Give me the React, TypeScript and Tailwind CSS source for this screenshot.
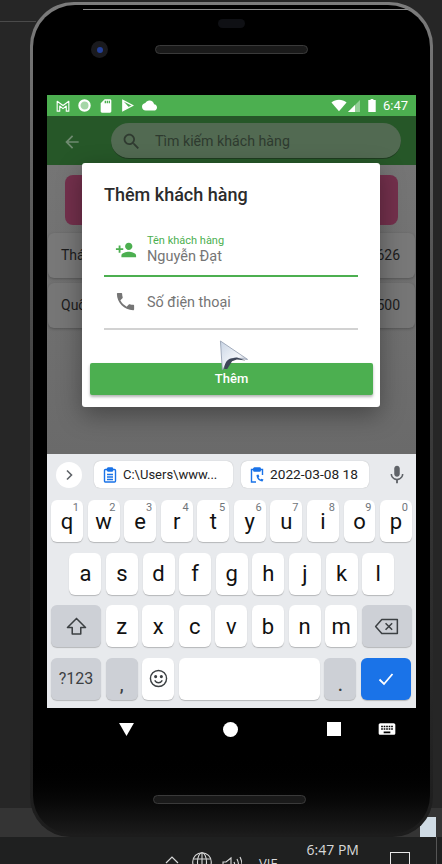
import { ReactNode } from 'react';

const ROBOTO = "font-['Roboto',sans-serif]";

function MdIcon({ d, className }: { d: string; className: string }) {
    return (
        <svg viewBox="0 0 24 24" fill="currentColor" className={className}>
            <path d={d} />
        </svg>
    );
}

const ICONS = {
    back: 'M20 11H7.83l5.59-5.59L12 4l-8 8 8 8 1.41-1.41L7.83 13H20v-2z',
    search: 'M15.5 14h-.79l-.28-.27C15.41 12.59 16 11.11 16 9.5 16 5.91 13.09 3 9.5 3S3 5.91 3 9.5 5.91 16 9.5 16c1.61 0 3.09-.59 4.23-1.57l.27.28v.79l5 4.99L20.49 19l-4.99-5zm-6 0C7.01 14 5 11.99 5 9.5S7.01 5 9.5 5 14 7.01 14 9.5 11.99 14 9.5 14z',
    personAdd: 'M15 12c2.21 0 4-1.79 4-4s-1.79-4-4-4-4 1.79-4 4 1.79 4 4 4zm-9-2V7H4v3H1v2h3v3h2v-3h3v-2H6zm9 4c-2.67 0-8 1.34-8 4v2h16v-2c0-2.66-5.33-4-8-4z',
    phone: 'M6.62 10.79c1.44 2.83 3.76 5.14 6.59 6.59l2.2-2.2c.27-.27.67-.36 1.02-.24 1.12.37 2.33.57 3.57.57.55 0 1 .45 1 1V20c0 .55-.45 1-1 1-9.39 0-17-7.61-17-17 0-.55.45-1 1-1h3.5c.55 0 1 .45 1 1 0 1.25.2 2.45.57 3.57.11.35.03.74-.25 1.02l-2.2 2.2z',
    cloud: 'M19.35 10.04C18.67 6.59 15.64 4 12 4 9.11 4 6.6 5.64 5.35 8.04 2.34 8.36 0 10.91 0 14c0 3.31 2.69 6 6 6h13c2.76 0 5-2.24 5-5 0-2.64-2.05-4.78-4.65-4.96z',
    sd: 'M18 2h-8L4.02 8 4 20c0 1.1.9 2 2 2h12c1.1 0 2-.9 2-2V4c0-1.1-.9-2-2-2zm-6 6h-2V4h2v4zm3 0h-2V4h2v4zm3 0h-2V4h2v4z',
    mic: 'M12 14c1.66 0 3-1.34 3-3V5c0-1.66-1.34-3-3-3S9 3.34 9 5v6c0 1.66 1.34 3 3 3zm5.3-3c0 3-2.54 5.1-5.3 5.1S6.7 14 6.7 11H5c0 3.41 2.72 6.23 6 6.72V21h2v-3.28c3.28-.48 6-3.3 6-6.72h-1.7z',
    keyboard: 'M20 5H4c-1.1 0-1.99.9-1.99 2L2 17c0 1.1.9 2 2 2h16c1.1 0 2-.9 2-2V7c0-1.1-.9-2-2-2zm-9 3h2v2h-2V8zm0 3h2v2h-2v-2zM8 8h2v2H8V8zm0 3h2v2H8v-2zm-1 2H5v-2h2v2zm0-3H5V8h2v2zm9 7H8v-2h8v2zm0-4h-2v-2h2v2zm0-3h-2V8h2v2zm3 3h-2v-2h2v2zm0-3h-2V8h2v2z',
};

function StatusBar() {
    return (
        <div className={`h-[21px] shrink-0 bg-[#4caf50] flex items-center justify-between pl-[9px] pr-[8px] text-white ${ROBOTO}`}>
            <div className="flex items-center">
                <svg viewBox="0 0 16 14" className="w-[14px] h-[12px]" fill="none">
                    <path d="M1.2 13V1.500L8 6.500l6.800-5V13h-3V7L8 10 4.200 7v6z" stroke="currentColor" strokeWidth="1.300" strokeLinejoin="round" />
                </svg>
                <svg viewBox="0 0 14 14" className="ml-[8px] w-[13px] h-[13px]">
                    <circle cx="7" cy="7" r="5.500" fill="#a5d6a7" stroke="white" strokeWidth="2.400" />
                </svg>
                <MdIcon d={ICONS.sd} className="ml-[7px] w-[16px] h-[16px]" />
                <svg viewBox="0 0 14 14" className="ml-[7px] w-[13px] h-[13px]" fill="none" stroke="currentColor" strokeWidth="1.500">
                    <path d="M2 1.500v11L12.500 7z" />
                    <path d="M2 1.500 8.500 9 2 12.500" fill="white" stroke="none" />
                </svg>
                <MdIcon d={ICONS.cloud} className="ml-[8px] w-[15px] h-[15px]" />
            </div>
            <div className="flex items-center">
                <svg viewBox="0 0 18 14" className="w-[16px] h-[13px]" fill="currentColor">
                    <path d="M9 13.500 0.500 3.500C3 1.500 5.800.5 9 .5s6 1 8.500 3z" />
                </svg>
                <svg viewBox="0 0 12 12" className="w-[12px] h-[12px] ml-[1px]">
                    <path d="M0 12 12 0v12z" fill="rgba(255,255,255,.4)" />
                    <path d="M0 12 7 5v7z" fill="white" />
                </svg>
                <svg viewBox="0 0 8 14" className="w-[8px] h-[13px] ml-[8px]" fill="currentColor">
                    <path d="M2.500 0h3v1.200H8V14H0V1.200h2.500z" />
                </svg>
                <span className="text-[13px] ml-[7px] leading-none">6:47</span>
            </div>
        </div>
    );
}

function AppBar() {
    return (
        <div className="h-[49px] bg-[#265728] flex items-start pt-[7px] pl-[15px] pr-[15px] shrink-0">
            <MdIcon d={ICONS.back} className="mt-[9px] w-[20px] h-[20px] text-[#6f8a70] shrink-0" />
            <div className="ml-[29px] flex-1 h-[36px] rounded-full bg-[#526a52] border-b border-[#1f3d20] flex items-center pl-[10px] pt-[2px]">
                <MdIcon d={ICONS.search} className="w-[21px] h-[21px] text-[#2f3a30] shrink-0" />
                <span className={`ml-[13px] text-[14.2px] text-[#2e3a2f] ${ROBOTO}`}>Tìm kiếm khách hàng</span>
            </div>
        </div>
    );
}

function BehindDialog() {
    return (
        <div className="flex-1 bg-gradient-to-b from-[#757575] to-[#6a6a6a]">
            <div className="mx-[18px] mt-[10px] h-[50px] rounded-[8px] bg-[#73304c]" />
            <div className={`mt-[8px] flex flex-col gap-[5px] text-[14px] text-[#1c1c1c] ${ROBOTO}`}>
                <div className="mx-px h-[45px] rounded-[6px] bg-[#787878] flex items-center justify-between pl-[13px] pr-[15px] shadow-[0_1px_3px_rgba(0,0,0,.25)]">
                    <span>Thái</span>
                    <span>626</span>
                </div>
                <div className="mx-px h-[45px] rounded-[6px] bg-[#767676] flex items-center justify-between pl-[13px] pr-[15px] shadow-[0_1px_3px_rgba(0,0,0,.25)]">
                    <span>Quốc</span>
                    <span>500</span>
                </div>
            </div>
        </div>
    );
}

function AddCustomerDialog() {
    return (
        <div className={`absolute left-[35px] top-[68px] w-[298px] h-[244px] bg-white rounded-[3px] shadow-[0_8px_24px_rgba(0,0,0,.35)] pl-[8px] pr-[7px] ${ROBOTO}`}>
            <div className="pl-[14px] pt-[21px] text-[18px] leading-[22px] font-medium text-[#2b2b2b]">Thêm khách hàng</div>
            <div className="ml-[14px] mr-[15px] mt-[21px] flex flex-col">
                <div className="h-[50px] flex items-end pb-[8px] border-b-2 border-[#4caf50]">
                    <div className="w-[43px] flex justify-center shrink-0">
                        <MdIcon d={ICONS.personAdd} className="w-[22px] h-[22px] text-[#4caf50] mb-[6px]" />
                    </div>
                    <div className="flex flex-col">
                        <span className="text-[11px] leading-[12px] text-[#4caf50]">Tên khách hàng</span>
                        <span className="text-[14.5px] leading-[20px] text-[#757575]">Nguyễn Đạt</span>
                    </div>
                </div>
                <div className="h-[53px] flex items-end pb-[15px] border-b-2 border-[#d2d2d2]">
                    <div className="w-[43px] flex justify-center shrink-0">
                        <MdIcon d={ICONS.phone} className="w-[23px] h-[23px] text-[#757575]" />
                    </div>
                    <span className="text-[14.4px] leading-[20px] text-[#757575]">Số điện thoại</span>
                </div>
            </div>
            <button className="mt-[33px] w-full h-[32px] bg-[#4caf50] rounded-[2px] text-white text-[13px] font-medium shadow-[0_2px_3px_rgba(0,0,0,.3)]">
                Thêm
            </button>
        </div>
    );
}

function Key({ label, hint, className = 'bg-white w-[32px]' }: { label: ReactNode; hint?: string; className?: string }) {
    return (
        <div className={`relative h-[42px] rounded-[6px] shadow-[0_1px_1px_rgba(0,0,0,.22)] flex items-center justify-center ${className}`}>
            {label}
            {hint && <span className="absolute top-[1px] right-[4px] text-[11px] leading-[13px] text-[#70757a]">{hint}</span>}
        </div>
    );
}

function Keyboard() {
    const row1 = [['q', '1'], ['w', '2'], ['e', '3'], ['r', '4'], ['t', '5'], ['y', '6'], ['u', '7'], ['i', '8'], ['o', '9'], ['p', '0']];
    const letter = (k: string) => <span className="text-[22px] text-[#111]">{k}</span>;
    return (
        <div className={`h-[254px] shrink-0 bg-[#e8eaed] px-[4px] ${ROBOTO}`}>
            <div className="h-[46px] flex items-center pb-[5px]">
                <div className="ml-[5px] w-[26px] h-[26px] rounded-full bg-white flex items-center justify-center text-[#5f6368] shrink-0">
                    <svg viewBox="0 0 12 12" className="w-[12px] h-[12px]" fill="none" stroke="currentColor" strokeWidth="1.600">
                        <path d="M4 1.500 8.500 6 4 10.500" />
                    </svg>
                </div>
                <div className="ml-[12px] w-[139px] h-[27px] bg-white rounded-[6px] shadow-[0_0_1px_rgba(0,0,0,.3)] flex items-center pl-[9px] text-[13px] text-[#222] shrink-0">
                    <svg viewBox="0 0 14 16" className="w-[14px] h-[16px] text-[#1a73e8] mr-[6px]" fill="none" stroke="currentColor" strokeWidth="1.400">
                        <rect x="1.500" y="2.500" width="11" height="12.500" rx="1" />
                        <rect x="4.500" y="1" width="5" height="3" rx=".6" fill="currentColor" />
                        <path d="M4 7.500h6M4 10h6M4 12.500h6" />
                    </svg>
                    C:\Users\www...
                </div>
                <div className="ml-[8px] w-[128px] h-[27px] bg-white rounded-[6px] shadow-[0_0_1px_rgba(0,0,0,.3)] flex items-center pl-[9px] text-[13.7px] text-[#222] shrink-0">
                    <svg viewBox="0 0 14 16" className="w-[14px] h-[16px] text-[#1a73e8] mr-[6px]" fill="none" stroke="currentColor" strokeWidth="1.400">
                        <path d="M5 2.500H1.500V15H6M9 2.500h3.500V8" />
                        <rect x="3.800" y="1" width="6.400" height="3" rx=".6" fill="currentColor" />
                        <path d="M6.500 8c0 3.500 2.500 6 6 6.500l1-2-2-.8-1 .8c-1-.5-1.700-1.300-2-2l.8-1-.8-2z" fill="currentColor" stroke="none" />
                    </svg>
                    2022-03-08 18
                </div>
                <MdIcon d={ICONS.mic} className="ml-[17px] w-[22px] h-[22px] text-[#5f6368] shrink-0" />
            </div>
            <div className="flex flex-col gap-[10.6px]">
                <div className="flex gap-[4.6px]">
                    {row1.map(([k, n]) => (
                        <Key key={k} label={letter(k)} hint={n} />
                    ))}
                </div>
                <div className="flex gap-[4.6px] pl-[18.4px]">
                    {'asdfghjkl'.split('').map(k => (
                        <Key key={k} label={letter(k)} />
                    ))}
                </div>
                <div className="flex gap-[4.6px]">
                    <Key
                        className="w-[50px] bg-[#cdd0d6]"
                        label={
                            <svg viewBox="0 0 22 20" className="w-[21px] h-[19px] text-[#3c4043]" fill="none" stroke="currentColor" strokeWidth="1.600">
                                <path d="M11 1.500 1.500 11H6.500v7h9v-7h5z" strokeLinejoin="round" />
                            </svg>
                        }
                    />
                    {'zxcvbnm'.split('').map(k => (
                        <Key key={k} label={letter(k)} />
                    ))}
                    <Key
                        className="w-[50px] bg-[#cdd0d6]"
                        label={
                            <svg viewBox="0 0 26 18" className="w-[25px] h-[17px] text-[#3c4043]" fill="none" stroke="currentColor" strokeWidth="1.600">
                                <path d="M8 1.500h16.500v15H8L1.500 9z" strokeLinejoin="round" />
                                <path d="m12 5.500 7 7m0-7-7 7" />
                            </svg>
                        }
                    />
                </div>
                <div className="flex gap-[4.6px]">
                    <Key className="w-[50px] bg-[#cdd0d6] text-[16px] text-[#3c4043]" label="?123" />
                    <Key className="w-[32px] bg-[#cdd0d6] text-[16px] font-bold text-[#3c4043] pt-[14px]" label="," />
                    <Key
                        label={
                            <svg viewBox="0 0 20 20" className="w-[19px] h-[19px] text-[#3c4043]" fill="none" stroke="currentColor" strokeWidth="1.500">
                                <circle cx="10" cy="10" r="8.500" />
                                <circle cx="7" cy="8" r=".9" fill="currentColor" />
                                <circle cx="13" cy="8" r=".9" fill="currentColor" />
                                <path d="M6 12c1 1.800 2.300 2.500 4 2.500s3-.7 4-2.500" />
                            </svg>
                        }
                    />
                    <Key className="w-[141px] bg-white" label="" />
                    <Key className="w-[32px] bg-[#cdd0d6] text-[16px] font-bold text-[#3c4043] pt-[14px]" label="." />
                    <Key
                        className="w-[50px] bg-[#1a73e8]"
                        label={
                            <svg viewBox="0 0 16 14" className="w-[16px] h-[14px] text-white" fill="none" stroke="currentColor" strokeWidth="1.800">
                                <path d="m1.500 7.500 4.500 4.500 8.500-10" />
                            </svg>
                        }
                    />
                </div>
            </div>
        </div>
    );
}

function NavBar() {
    return (
        <div className="h-[42px] flex items-center text-white">
            <svg viewBox="0 0 16 14" className="ml-[72px] w-[15px] h-[13px]" fill="currentColor">
                <path d="M0 0h16L8 14z" />
            </svg>
            <div className="ml-[89px] w-[15px] h-[15px] rounded-full bg-white" />
            <div className="ml-[89px] w-[14px] h-[14px] bg-white" />
            <MdIcon d={ICONS.keyboard} className="ml-[36px] w-[20px] h-[20px]" />
        </div>
    );
}

function Speaker({ className }: { className: string }) {
    return <div className={`w-[153px] h-[9px] rounded-full bg-[#1a1a1a] border border-[#3a3a3a] ${className}`} />;
}

function Cursor() {
    return (
        <svg viewBox="0 0 30 34" className="absolute left-[172px] top-[245px] w-[30px] h-[33px]">
            <defs>
                <linearGradient id="cursorFill" x1="0" y1="0" x2="1" y2="1">
                    <stop offset="0" stopColor="#c8d4e4" />
                    <stop offset="0.6" stopColor="#f4f6fa" />
                    <stop offset="1" stopColor="#8b95a8" />
                </linearGradient>
            </defs>
            <path d="M1 1 29 20 16 18.500 10 20 3 31z" fill="url(#cursorFill)" stroke="#8c97ab" strokeWidth="0.800" />
            <path d="M5 30c0-5 2-10 7-11l6-1 9 3-9-1-5 2-5 8z" fill="#3e4658" />
        </svg>
    );
}

export default function App() {
    return (
        <div className="w-[442px] h-[864px] overflow-hidden bg-[#252526] flex flex-col">
            <div className="h-[837px] shrink-0 relative bg-[#262626] overflow-hidden">
                <div className="absolute left-0 top-[21px] w-[36px] h-px bg-[#4a4a4a]" />
                <div className="absolute left-0 top-[808px] w-full h-[29px] bg-[#343434]" />
                <div className="absolute left-[420px] top-[817px] w-[16px] h-[20px] bg-[#cfdbe4]" />
                <div className="absolute left-[30px] top-[2px] w-[403px] h-[835px] rounded-t-[44px] rounded-b-[40px] p-[3px] bg-gradient-to-b from-[#7c7c7c] via-[#3c3c3c] to-[#1c1c1c]">
                    <div className="relative w-full h-full rounded-t-[42px] rounded-b-[38px] bg-gradient-to-b from-black from-[90%] to-[#1b1b1b] flex flex-col items-center">
                        <div className="absolute left-[50px] right-[22px] top-[4px] h-px bg-[#8a8a8a]" />
                        <div className="mt-[14px] w-[27px] h-[9px] rounded-full bg-[#0f1014]" />
                        <div className="relative mt-[17px] w-full h-[9px] flex justify-center">
                            <Speaker className="" />
                            <div className="absolute left-[58px] top-[-4px] w-[17px] h-[17px] rounded-full bg-[#1a1a1e] flex items-center justify-center">
                                <div className="w-[6px] h-[6px] rounded-full bg-[#24409a]" />
                            </div>
                        </div>
                        <div className="relative mt-[41px] w-[369px] h-[613px] flex flex-col shrink-0 overflow-hidden">
                            <StatusBar />
                            <AppBar />
                            <BehindDialog />
                            <Keyboard />
                            <AddCustomerDialog />
                            <Cursor />
                        </div>
                        <div className="w-[369px]">
                            <NavBar />
                        </div>
                        <Speaker className="mt-[45px] -translate-x-[2px]" />
                    </div>
                </div>
            </div>
            <div className="h-[27px] bg-[#1f2020] relative flex items-start text-[#d8d8d8] font-['Open_Sans',sans-serif] overflow-hidden">
                <svg viewBox="0 0 14 8" className="ml-[165px] mt-[19px] w-[14px] h-[8px]" fill="none" stroke="currentColor" strokeWidth="1.200">
                    <path d="M1 7 7 1l6 6" />
                </svg>
                <svg viewBox="0 0 20 20" className="ml-[13px] mt-[15px] w-[20px] h-[20px]" fill="none" stroke="currentColor" strokeWidth="1.100">
                    <circle cx="10" cy="10" r="9.300" />
                    <ellipse cx="10" cy="10" rx="4.500" ry="9.300" />
                    <path d="M10 .7v18.600M1 7h18M1 13h18" />
                </svg>
                <svg viewBox="0 0 20 20" className="ml-[10px] mt-[18px] w-[20px] h-[20px]" fill="none" stroke="currentColor" strokeWidth="1.100">
                    <path d="M1 7h3l5-4v14l-5-4H1zM12 7c1 2 1 4 0 6M15 4c2 4 2 8 0 12M18 2c2.500 5 2.500 11 0 16" />
                </svg>
                <span className="ml-[17px] mt-[18px] text-[13px] leading-[16px]">VIE</span>
                <span className="ml-[29px] mt-[5px] text-[14px] leading-[16px]">6:47 PM</span>
                <div className="ml-[31px] mt-[15px] w-[20px] h-[20px] border border-[#e8e8e8]" />
                <div className="absolute left-[436px] top-0 w-px h-full bg-[#555]" />
            </div>
        </div>
    );
}
